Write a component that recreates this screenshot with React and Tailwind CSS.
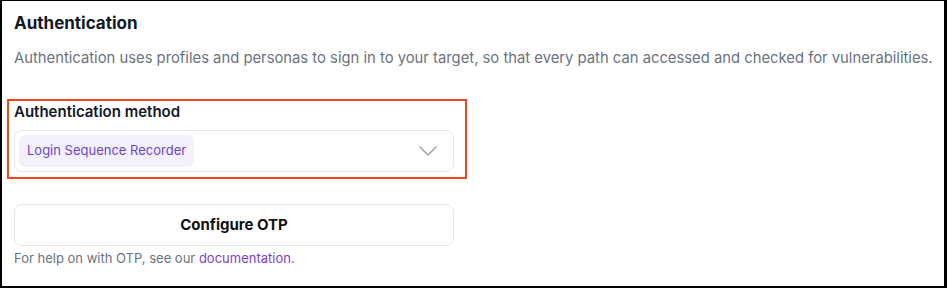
export default function App() {
  return (
    <div
      className="w-[947px] h-[288px] bg-white border-l-2 border-t border-r-[3px] border-b-2 border-black pl-3 pt-2 text-[#111827]"
      style={{ fontFamily: 'Inter, "Noto Sans", sans-serif' }}
    >
      <h2 className="text-[17px] leading-[28px] font-bold">Authentication</h2>
      <p className="mt-[9px] text-[14.8px] leading-[24px] text-[#6b7280] whitespace-nowrap">
        Authentication uses profiles and personas to sign in to your target, so that every path can accessed and checked for vulnerabilities.
      </p>

      {/* highlighted section */}
      <div className="mt-[29px] -ml-[7px] w-[460px] border-2 border-[#f2461f] pl-[5px] pb-[5px]">
        <label className="block text-[15px] leading-[22px] font-semibold">Authentication method</label>
        <div className="mt-[7px] w-[440px] h-[42px] flex items-center justify-between rounded-lg border border-[#e5e7eb] p-1 pr-4">
          <span className="h-[32px] flex items-center px-2 rounded-md bg-[#f3f1fc] text-[13px] text-[#6b46c8]">
            Login Sequence Recorder
          </span>
          <svg width="18" height="10" viewBox="0 0 18 10" fill="none">
            <path d="M1 1l8 8 8-8" stroke="#9ca3af" strokeWidth="1.6" strokeLinecap="round" strokeLinejoin="round" />
          </svg>
        </div>
      </div>

      <button className="mt-[25px] w-[440px] h-[42px] rounded-lg border border-[#e5e7eb] text-[15px] font-bold text-[#111]">
        Configure OTP
      </button>
      <p className="mt-[2px] text-[13px] leading-[20px] text-[#6b7280]">
        For help on with OTP, see our <a className="text-[#7c3fd1]">documentation</a>.
      </p>
    </div>
  );
}
